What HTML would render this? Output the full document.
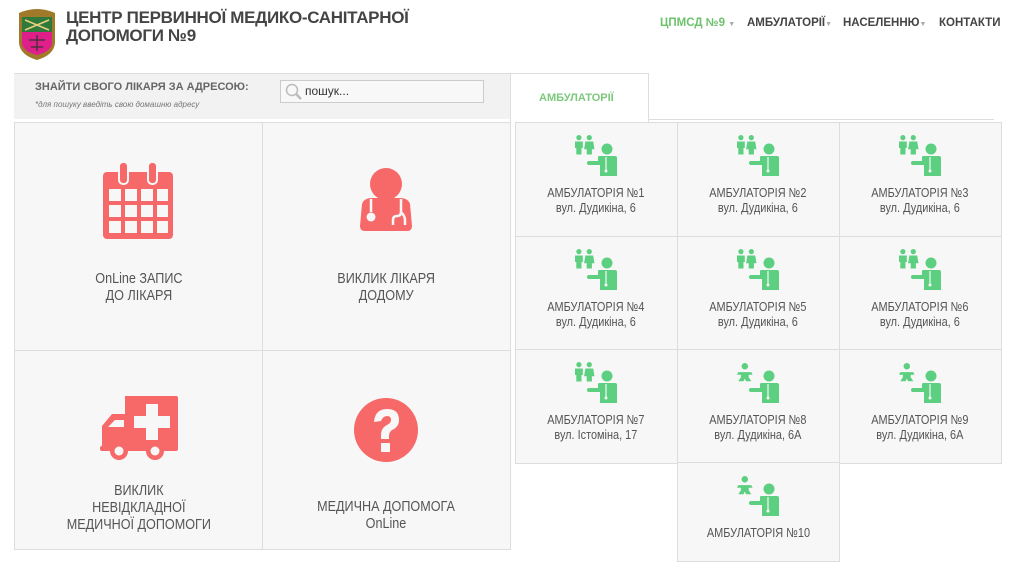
<!DOCTYPE html>
<html><head><meta charset="utf-8">
<style>
*{margin:0;padding:0;box-sizing:border-box}
body{width:1024px;height:536px;overflow:hidden;background:#fff;font-family:"Liberation Sans",sans-serif;position:relative}
.a{position:absolute}
.n{color:#555}
.n span{display:inline-block;transform:scaleX(.84);transform-origin:center;white-space:nowrap}
.title{left:66px;top:9px;font-size:17px;font-weight:bold;color:#444;line-height:18px;letter-spacing:-0.3px;white-space:nowrap}
.nav{top:17px;font-size:11.5px;font-weight:bold;color:#444;white-space:nowrap}
.car{color:#aaa;font-size:7px;font-weight:normal}
.cell{position:absolute;background:#f7f7f7;border:1px solid #ddd;text-align:center}
.big{font-size:15px;line-height:17px}
.amb{font-size:13px;line-height:15px}
</style></head><body>
<svg class="a" style="left:14px;top:7px" width="46" height="54" viewBox="0 0 46 54">
<path d="M5 6 Q23 -2 41 6 L41 36 Q40 48 23 53 Q6 48 5 36Z" fill="#a07a2a"/>
<rect x="8" y="10" width="30" height="15" fill="#2f7a3a"/>
<path d="M8 25 H38 V37 Q36 45 23 48 Q10 45 8 37Z" fill="#e0208a"/>
<path d="M11 13 L35 23 M35 13 L11 23" stroke="#e8d080" stroke-width="1.5"/>
<path d="M23 28 V44 M15 33 L31 33 M17 40 L29 40" stroke="#333" stroke-width="1.2"/>
</svg>
<div class="a title">ЦЕНТР ПЕРВИННОЇ МЕДИКО-САНІТАРНОЇ<br>ДОПОМОГИ №9</div>
<div class="a nav" style="left:660px;color:#6cc26c">ЦПМСД №9 <span class="car">▼</span></div>
<div class="a nav" style="left:747px">АМБУЛАТОРІЇ<span class="car">▼</span></div>
<div class="a nav" style="left:843px">НАСЕЛЕННЮ<span class="car">▼</span></div>
<div class="a nav" style="left:939px">КОНТАКТИ</div>

<div class="a" style="left:14px;top:73px;width:496px;height:46px;background:#f2f2f2;border-top:1px solid #ddd"></div>
<div class="a" style="left:35px;top:81px;font-size:11px;font-weight:bold;color:#666">ЗНАЙТИ СВОГО ЛІКАРЯ ЗА АДРЕСОЮ:</div>
<div class="a" style="left:35px;top:100px;font-size:8px;font-style:italic;color:#777">*для пошуку введіть свою домашню адресу</div>
<div class="a" style="left:280px;top:80px;width:204px;height:23px;background:#f8f8f8;border:1px solid #ccc"></div>
<svg class="a" style="left:284px;top:82px" width="20" height="20" viewBox="0 0 20 20"><circle cx="8" cy="8" r="5.5" fill="none" stroke="#bbb" stroke-width="1.5"/><path d="M12 12 L17 17" stroke="#bbb" stroke-width="2.5"/></svg>
<div class="a" style="left:305px;top:84px;font-size:12px;color:#333">пошук...</div>

<div class="a" style="left:510px;top:73px;width:139px;height:50px;border:1px solid #ddd;border-bottom:none;background:#fff"></div>
<div class="a" style="left:539px;top:92px;font-size:11px;font-weight:bold;color:#7cc87c">АМБУЛАТОРІЇ</div>
<div class="a" style="left:648px;top:119px;width:346px;height:1px;background:#ddd"></div>

<div class="cell" style="left:14px;top:122px;width:249px;height:229px"></div>
<div class="cell" style="left:262px;top:122px;width:249px;height:229px"></div>
<div class="cell" style="left:14px;top:350px;width:249px;height:200px"></div>
<div class="cell" style="left:262px;top:350px;width:249px;height:200px"></div>

<svg class="a" style="left:103px;top:162px" width="70" height="77" viewBox="0 0 70 77">
<rect x="0" y="10" width="70" height="67" rx="4" fill="#f76868"/>
<rect x="16" y="0" width="9" height="22" rx="4" fill="#f76868" stroke="#f7f7f7" stroke-width="2"/>
<rect x="45" y="0" width="9" height="22" rx="4" fill="#f76868" stroke="#f7f7f7" stroke-width="2"/>
<g fill="#f7f7f7">
<rect x="6" y="27" width="12" height="12"/><rect x="22" y="27" width="12" height="12"/><rect x="38" y="27" width="12" height="12"/><rect x="54" y="27" width="11" height="12"/>
<rect x="6" y="43" width="12" height="12"/><rect x="22" y="43" width="12" height="12"/><rect x="38" y="43" width="12" height="12"/><rect x="54" y="43" width="11" height="12"/>
<rect x="6" y="59" width="12" height="12"/><rect x="22" y="59" width="12" height="12"/><rect x="38" y="59" width="12" height="12"/><rect x="54" y="59" width="11" height="12"/>
</g></svg>
<div class="a n big" style="left:14px;top:270px;width:249px;text-align:center"><span>OnLine ЗАПИС<br>ДО ЛІКАРЯ</span></div>

<svg class="a" style="left:356px;top:168px" width="60" height="65" viewBox="0 0 60 65">
<circle cx="30" cy="16" r="16" fill="#f76868"/>
<path d="M6 36 Q8 30 16 30 L44 30 Q52 30 54 36 L56 58 Q56 63 51 63 L9 63 Q4 63 4 58Z" fill="#f76868"/>
<path d="M15 31 V44 M45 31 V44 Q45 48 41 48 Q37 48 37 52 V57 M45 44 Q49 48 49 52 V57" stroke="#f7f7f7" stroke-width="2.5" fill="none"/>
<circle cx="15" cy="49" r="4.5" fill="#f7f7f7"/>
</svg>
<div class="a n big" style="left:262px;top:270px;width:249px;text-align:center"><span>ВИКЛИК ЛІКАРЯ<br>ДОДОМУ</span></div>

<svg class="a" style="left:100px;top:396px" width="80" height="65" viewBox="0 0 80 65">
<path d="M25 0 H76 Q78 0 78 2 V53 Q78 55 76 55 H4 Q2 55 2 53 V30 L12 18 H25Z" fill="#f76868"/>
<path d="M8 31 L15 24 H24 V31Z" fill="#f7f7f7"/>
<rect x="0" y="50" width="6" height="5" rx="2" fill="#f76868"/>
<path d="M46 8 H58 V20 H70 V32 H58 V44 H46 V32 H34 V20 H46Z" fill="#f7f7f7"/>
<circle cx="19" cy="55" r="9" fill="#f76868"/><circle cx="19" cy="55" r="4.5" fill="#f7f7f7"/>
<circle cx="55" cy="55" r="9" fill="#f76868"/><circle cx="55" cy="55" r="4.5" fill="#f7f7f7"/>
</svg>
<div class="a n big" style="left:14px;top:482px;width:249px;text-align:center"><span>ВИКЛИК<br>НЕВІДКЛАДНОЇ<br>МЕДИЧНОЇ ДОПОМОГИ</span></div>

<svg class="a" style="left:353px;top:397px" width="66" height="66" viewBox="0 0 66 66">
<circle cx="33" cy="33" r="32" fill="#f76868"/>
<path d="M21 25 Q22 12 34 12 Q46 12 46 23 Q46 30 39 33 Q36 35 36 39 V42 H28 V38 Q28 31 34 28 Q38 26 38 23 Q38 19 34 19 Q30 19 28 24Z" fill="#f7f7f7"/>
<rect x="28" y="46" width="9" height="9" fill="#f7f7f7"/>
</svg>
<div class="a n big" style="left:262px;top:498px;width:249px;text-align:center"><span>МЕДИЧНА ДОПОМОГА<br>OnLine</span></div>

<svg width="0" height="0" style="position:absolute"><defs>
<g id="doc" fill="#5ccf80">
<circle cx="22" cy="6" r="5.5"/>
<path d="M14 13 H30 Q32 13 32 15 V33 H15 V22 H4 Q2 22 2 20 Q2 18 4 18 H13 V15 Q13 13 14 13Z"/>
<path d="M21 14 V27" stroke="#f7f7f7" stroke-width="1.2"/><circle cx="21" cy="28" r="1.5" fill="#f7f7f7"/>
</g>
<g id="pp" fill="#5ccf80" transform="scale(1.3)">
<circle cx="3" cy="2" r="2"/><path d="M0 5 H6 V10 H5 V15 H1 V10 H0Z"/>
<circle cx="11" cy="2" r="2"/><path d="M8 5 H14 L15 11 H13 V15 H9 V11 H7Z"/>
</g>
<g id="baby" fill="#5ccf80" transform="scale(1.3)">
<circle cx="6" cy="2.5" r="2.5"/><path d="M1 7 H11 L12 9 H9 V11 L11 14 H7 L6 12 L5 14 H1 L3 11 V9 H0Z"/>
</g>
</defs></svg>

<div id="rg"></div>
<script>
var d=[["№1","вул. Дудикіна, 6",0],["№2","вул. Дудикіна, 6",0],["№3","вул. Дудикіна, 6",0],["№4","вул. Дудикіна, 6",0],["№5","вул. Дудикіна, 6",0],["№6","вул. Дудикіна, 6",0],["№7","вул. Істоміна, 17",0],["№8","вул. Дудикіна, 6А",1],["№9","вул. Дудикіна, 6А",1],["№10","",1]];
var xs=[515,677,839],ys=[122,236,349,462],h="";
d.forEach(function(a,i){var c=i%3,r=Math.floor(i/3);if(i==9){c=1;r=3}
var x=xs[c],y=ys[r];
h+='<div class="cell" style="left:'+x+'px;top:'+y+'px;width:163px;height:'+(i==9?100:115)+'px"></div>';
h+='<svg class="a" style="left:'+(x+58)+'px;top:'+(y+12)+'px" width="50" height="44"><use href="#'+(a[2]?'baby':'pp')+'" x="2" y="'+(a[2]?2:1)+'"/><use href="#doc" x="12" y="9"/></svg>';
h+='<div class="a n amb" style="left:'+x+'px;top:'+(y+63)+'px;width:162px;text-align:center"><span>АМБУЛАТОРІЯ '+a[0]+'<br>'+a[1]+'</span></div>';});
document.getElementById('rg').innerHTML=h;
</script>
</body></html>
